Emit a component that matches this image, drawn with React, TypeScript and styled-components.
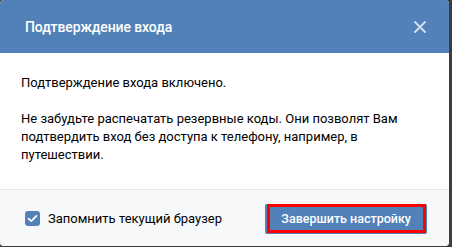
import React from "react";
import styled, { createGlobalStyle } from "styled-components";

const GlobalStyle = createGlobalStyle`
  html, body {
    margin: 0;
    padding: 0;
    background: #3d3d3d;
  }
  body {
    font-family: Roboto, "Open Sans", "Liberation Sans", sans-serif;
    -webkit-font-smoothing: antialiased;
  }
`;

const Box = styled.div`
  width: 449px;
  height: 246px;
  background: #ffffff;
  border-radius: 4px;
  overflow: hidden;
  display: flex;
  flex-direction: column;
`;

const Header = styled.div`
  height: 53px;
  flex-shrink: 0;
  background: #5181b8;
  display: flex;
  align-items: center;
  justify-content: space-between;
  padding: 0 22px 0 25px;
  box-sizing: border-box;
`;

const Title = styled.div`
  color: #ffffff;
  font-size: 14px;
  font-weight: 500;
  letter-spacing: -0.1px;
`;

const Close = styled.button`
  width: 14px;
  height: 14px;
  padding: 0;
  border: none;
  background: transparent;
  display: flex;
  align-items: center;
  justify-content: center;
  cursor: pointer;
  opacity: 0.75;
`;

const Body = styled.div`
  flex: 1;
  padding: 21px 20px 0 21px;
  font-size: 13px;
  line-height: 18px;
  color: #000000;
`;

const Paragraph = styled.p`
  margin: 0 0 18px;
`;

const Footer = styled.div`
  flex-shrink: 0;
  height: 57px;
  box-sizing: border-box;
  border-top: 1px solid #e7e8ec;
  background: #f7f8fa;
  display: flex;
  align-items: center;
  justify-content: space-between;
  padding: 0 22px 0 25px;
`;

const CheckLabel = styled.label`
  display: flex;
  align-items: center;
  gap: 8px;
  font-size: 13px;
  color: #000000;
  cursor: pointer;
`;

const CheckBox = styled.span`
  width: 15px;
  height: 15px;
  border-radius: 3px;
  background: #5181b8;
  display: flex;
  align-items: center;
  justify-content: center;
`;

const Button = styled.button<{ highlighted?: boolean }>`
  position: relative;
  height: 30px;
  padding: 0 16px;
  border: none;
  border-radius: 2px;
  background: #5181b8;
  color: #ffffff;
  font-family: inherit;
  font-size: 12.5px;
  font-weight: 500;
  margin-top: 1px;
  cursor: pointer;

  &::after {
    content: "";
    display: ${(p) => (p.highlighted ? "block" : "none")};
    position: absolute;
    top: 0.5px;
    left: 1.5px;
    right: 1.5px;
    bottom: 1px;
    border: 3px solid #ff0000;
    pointer-events: none;
  }
`;

export default function App() {
  return (
    <>
      <GlobalStyle />
      <Box>
        <Header>
          <Title>Подтверждение входа</Title>
          <Close aria-label="Закрыть">
            <svg width="12" height="12" viewBox="0 0 12 12">
              <path
                d="M1 1L11 11M11 1L1 11"
                stroke="#ffffff"
                strokeWidth="1.8"
                strokeLinecap="round"
              />
            </svg>
          </Close>
        </Header>
        <Body>
          <Paragraph>Подтверждение входа включено.</Paragraph>
          <Paragraph>
            Не забудьте распечатать резервные коды. Они позволят Вам
            подтвердить вход без доступа к телефону, например, в путешествии.
          </Paragraph>
        </Body>
        <Footer>
          <CheckLabel>
            <CheckBox>
              <svg width="11" height="9" viewBox="0 0 11 9">
                <path
                  d="M1.5 4.6L4.2 7.2L9.5 1.8"
                  stroke="#ffffff"
                  strokeWidth="1.7"
                  fill="none"
                  strokeLinecap="round"
                  strokeLinejoin="round"
                />
              </svg>
            </CheckBox>
            Запомнить текущий браузер
          </CheckLabel>
          <Button highlighted>Завершить настройку</Button>
        </Footer>
      </Box>
    </>
  );
}
